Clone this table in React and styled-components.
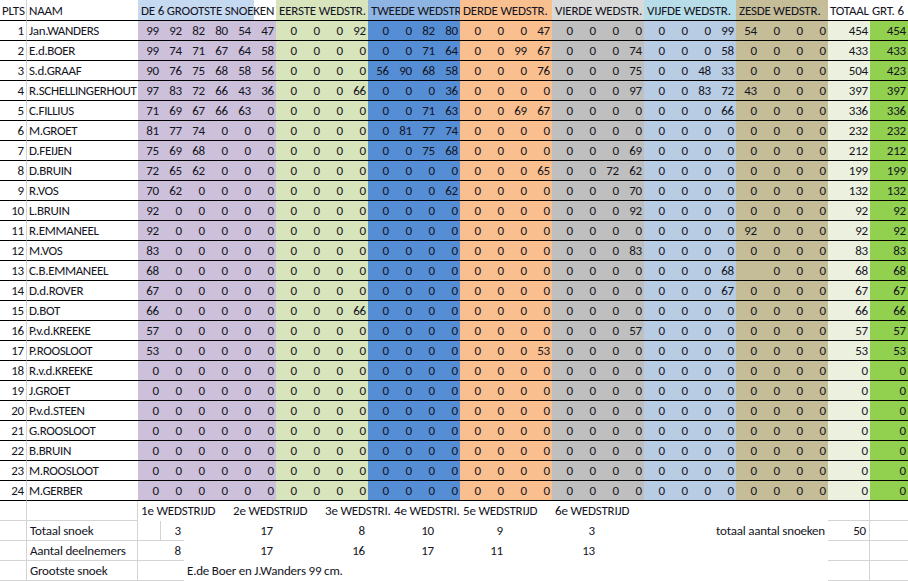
import React from 'react'
import styled, { createGlobalStyle } from 'styled-components'

const GlobalStyle = createGlobalStyle`
  body {
    margin: 0;
    background: #fff;
    overflow: hidden;
    font-family: Carlito, Calibri, Lato, "Liberation Sans", sans-serif;
    font-size: 13px;
    letter-spacing: -0.2px;
    color: #14141e;
  }
`

const groups = [
  { title: 'DE 6 GROOTSTE SNOEKEN', n: 6, head: '#c5d9f1', body: '#ccc0da', headStop: 116 },
  { title: 'EERSTE WEDSTR.', n: 4, head: '#d8e4bc', body: '#d8e4bc' },
  { title: 'TWEEDE WEDSTR', n: 4, head: '#8db4e2', body: '#558ed5' },
  { title: 'DERDE WEDSTR.', n: 4, head: '#fabf8f', body: '#fabf8f' },
  { title: 'VIERDE WEDSTR.', n: 4, head: '#d9d9d9', body: '#bfbfbf' },
  { title: 'VIJFDE WEDSTR.', n: 4, head: '#b7dee8', body: '#b8cce4' },
  { title: 'ZESDE WEDSTR.', n: 4, head: '#c4bd97', body: '#c4bd97' },
]

const z4 = [0, 0, 0, 0]

const players = [
  ['Jan.WANDERS', [99, 92, 82, 80, 54, 47], [0, 0, 0, 92], [0, 0, 82, 80], [0, 0, 0, 47], z4, [0, 0, 0, 99], [54, 0, 0, 0], 454, 454],
  ['E.d.BOER', [99, 74, 71, 67, 64, 58], z4, [0, 0, 71, 64], [0, 0, 99, 67], [0, 0, 0, 74], [0, 0, 0, 58], z4, 433, 433],
  ['S.d.GRAAF', [90, 76, 75, 68, 58, 56], z4, [56, 90, 68, 58], [0, 0, 0, 76], [0, 0, 0, 75], [0, 0, 48, 33], z4, 504, 423],
  ['R.SCHELLINGERHOUT', [97, 83, 72, 66, 43, 36], [0, 0, 0, 66], [0, 0, 0, 36], z4, [0, 0, 0, 97], [0, 0, 83, 72], [43, 0, 0, 0], 397, 397],
  ['C.FILLIUS', [71, 69, 67, 66, 63, 0], z4, [0, 0, 71, 63], [0, 0, 69, 67], z4, [0, 0, 0, 66], z4, 336, 336],
  ['M.GROET', [81, 77, 74, 0, 0, 0], z4, [0, 81, 77, 74], z4, z4, z4, z4, 232, 232],
  ['D.FEIJEN', [75, 69, 68, 0, 0, 0], z4, [0, 0, 75, 68], z4, [0, 0, 0, 69], z4, z4, 212, 212],
  ['D.BRUIN', [72, 65, 62, 0, 0, 0], z4, z4, [0, 0, 0, 65], [0, 0, 72, 62], z4, z4, 199, 199],
  ['R.VOS', [70, 62, 0, 0, 0, 0], z4, [0, 0, 0, 62], z4, [0, 0, 0, 70], z4, z4, 132, 132],
  ['L.BRUIN', [92, 0, 0, 0, 0, 0], z4, z4, z4, [0, 0, 0, 92], z4, z4, 92, 92],
  ['R.EMMANEEL', [92, 0, 0, 0, 0, 0], z4, z4, z4, z4, z4, [92, 0, 0, 0], 92, 92],
  ['M.VOS', [83, 0, 0, 0, 0, 0], z4, z4, z4, [0, 0, 0, 83], z4, z4, 83, 83],
  ['C.B.EMMANEEL', [68, 0, 0, 0, 0, 0], z4, z4, z4, z4, [0, 0, 0, 68], ['', 0, 0, 0], 68, 68],
  ['D.d.ROVER', [67, 0, 0, 0, 0, 0], z4, z4, z4, z4, [0, 0, 0, 67], z4, 67, 67],
  ['D.BOT', [66, 0, 0, 0, 0, 0], [0, 0, 0, 66], z4, z4, z4, z4, z4, 66, 66],
  ['P.v.d.KREEKE', [57, 0, 0, 0, 0, 0], z4, z4, z4, [0, 0, 0, 57], z4, z4, 57, 57],
  ['P.ROOSLOOT', [53, 0, 0, 0, 0, 0], z4, z4, [0, 0, 0, 53], z4, z4, z4, 53, 53],
  ['R.v.d.KREEKE'],
  ['J.GROET'],
  ['P.v.d.STEEN'],
  ['G.ROOSLOOT'],
  ['B.BRUIN'],
  ['M.ROOSLOOT'],
  ['M.GERBER'],
].map(([name, ...rest]) =>
  rest.length ? { name, sets: rest.slice(0, 7), tot: rest[7], grt: rest[8] }
    : { name, sets: [[0, 0, 0, 0, 0, 0], z4, z4, z4, z4, z4, z4], tot: 0, grt: 0 }
)

const COLS = '27px 111px repeat(30, 23px) 42px 40px'

const Sheet = styled.div`
  display: grid;
  grid-template-columns: ${COLS};
  grid-template-rows: 21px;
  grid-auto-rows: 20px;
  width: 910px;
`

const HeadCell = styled.div`
  grid-column: span ${p => p.$span || 1};
  height: 21px;
  box-sizing: border-box;
  border-bottom: 1px solid #000;
  border-right: ${p => (p.$line ? '1px solid #d4d4d4' : 'none')};
  background: ${p => p.$bg || '#fff'};
  padding: 0 0 0 ${p => p.$indent ?? 3}px;
  line-height: 21px;
  white-space: nowrap;
  overflow: hidden;
`

const Cell = styled.div`
  height: 20px;
  box-sizing: border-box;
  border-bottom: 1px solid #000;
  border-right: ${p => (p.$line ? '1px solid #d4d4d4' : 'none')};
  background: ${p => p.$bg || '#fff'};
  padding: 0 ${p => p.$pad ?? 3}px 0 3px;
  text-align: right;
  line-height: 20px;
  white-space: nowrap;
  overflow: hidden;
`

const NameCell = styled(Cell)`
  text-align: left;
  padding: 0 0 0 2px;
  letter-spacing: -0.35px;
`

const Footer = styled.div`
  display: grid;
  grid-template-columns: ${COLS};
  grid-template-rows: repeat(4, 20px);
  width: 910px;
`

const FootCell = styled.div`
  grid-column: ${p => p.$col} / span ${p => p.$span || 1};
  grid-row: ${p => p.$row};
  height: 20px;
  box-sizing: border-box;
  border-bottom: ${p => (p.$grid ? '1px solid #d4d4d4' : 'none')};
  border-right: ${p => (p.$vline ? '1px solid #d4d4d4' : 'none')};
  padding: 0 3px;
  text-align: ${p => (p.$right ? 'right' : 'left')};
  line-height: 20px;
  white-space: nowrap;
  overflow: hidden;
`

// numeric column k (0..29) -> grid column
const nc = k => 3 + k

const matches = [
  { label: '1e WEDSTRIJD', k: 0, span: 4, snoek: 3, deeln: 8, nk: 1 },
  { label: '2e WEDSTRIJD', k: 4, span: 4, snoek: 17, deeln: 17, nk: 5 },
  { label: '3e WEDSTRI.', k: 8, span: 3, snoek: 8, deeln: 16, nk: 9 },
  { label: '4e WEDSTRI.', k: 11, span: 3, snoek: 10, deeln: 17, nk: 12 },
  { label: '5e WEDSTRIJD', k: 14, span: 4, snoek: 9, deeln: 11, nk: 15 },
  { label: '6e WEDSTRIJD', k: 18, span: 4, snoek: 3, deeln: 13, nk: 19 },
]

const labels = ['', 'Totaal snoek', 'Aantal deelnemers', 'Grootste snoek']

function SummaryRows() {
  return (
    <Footer>
      {labels.map((l, i) => (
        <React.Fragment key={i}>
          <FootCell $col={1} $row={i + 1} $grid $vline />
          <FootCell $col={2} $row={i + 1} $grid $vline>{l}</FootCell>
          <FootCell $col={33} $row={i + 1} $grid $vline $right>{i === 1 ? '50' : ''}</FootCell>
          <FootCell $col={34} $row={i + 1} $grid />
        </React.Fragment>
      ))}

      {matches.map(m => (
        <React.Fragment key={m.label}>
          <FootCell $col={nc(m.k)} $span={m.span} $row={1}>{m.label}</FootCell>
          <FootCell $col={nc(m.nk)} $row={2} $right $grid={m.nk === 1}>{m.snoek}</FootCell>
          <FootCell $col={nc(m.nk)} $row={3} $right $grid={m.nk === 1}>{m.deeln}</FootCell>
        </React.Fragment>
      ))}

      <FootCell $col={nc(0)} $row={2} $grid $vline />
      <FootCell $col={nc(0)} $row={3} $grid />
      <FootCell $col={nc(0)} $row={4} $grid />
      <FootCell $col={nc(1)} $row={4} $grid />
      <FootCell $col={nc(25)} $span={5} $row={2}>totaal aantal snoeken</FootCell>
      <FootCell $col={nc(2)} $span={12} $row={4}>E.de Boer en J.Wanders 99 cm.</FootCell>
    </Footer>
  )
}

export default function App() {
  return (
    <>
      <GlobalStyle />
      <Sheet>
        <HeadCell $line $indent={2}>PLTS</HeadCell>
        <HeadCell $indent={2}>NAAM</HeadCell>
        {groups.map(g => (
          <HeadCell
            key={g.title}
            $span={g.n}
            $bg={g.headStop ? `linear-gradient(to right, ${g.head} ${g.headStop}px, #fff ${g.headStop}px)` : g.head}
          >
            {g.title}
          </HeadCell>
        ))}
        <HeadCell $indent={2}>TOTAAL</HeadCell>
        <HeadCell $indent={2}>GRT. 6</HeadCell>

        {players.map((p, i) => (
          <React.Fragment key={p.name}>
            <Cell $line $pad={2}>{i + 1}</Cell>
            <NameCell>{p.name}</NameCell>
            {p.sets.map((vals, gi) =>
              vals.map((v, vi) => (
                <Cell key={gi + '-' + vi} $bg={groups[gi].body} $pad={2}>{v}</Cell>
              ))
            )}
            <Cell $bg="#ebf1de" $pad={2}>{p.tot}</Cell>
            <Cell $bg="#92d050" $pad={4}>{p.grt}</Cell>
          </React.Fragment>
        ))}
      </Sheet>
      <SummaryRows />
    </>
  )
}
